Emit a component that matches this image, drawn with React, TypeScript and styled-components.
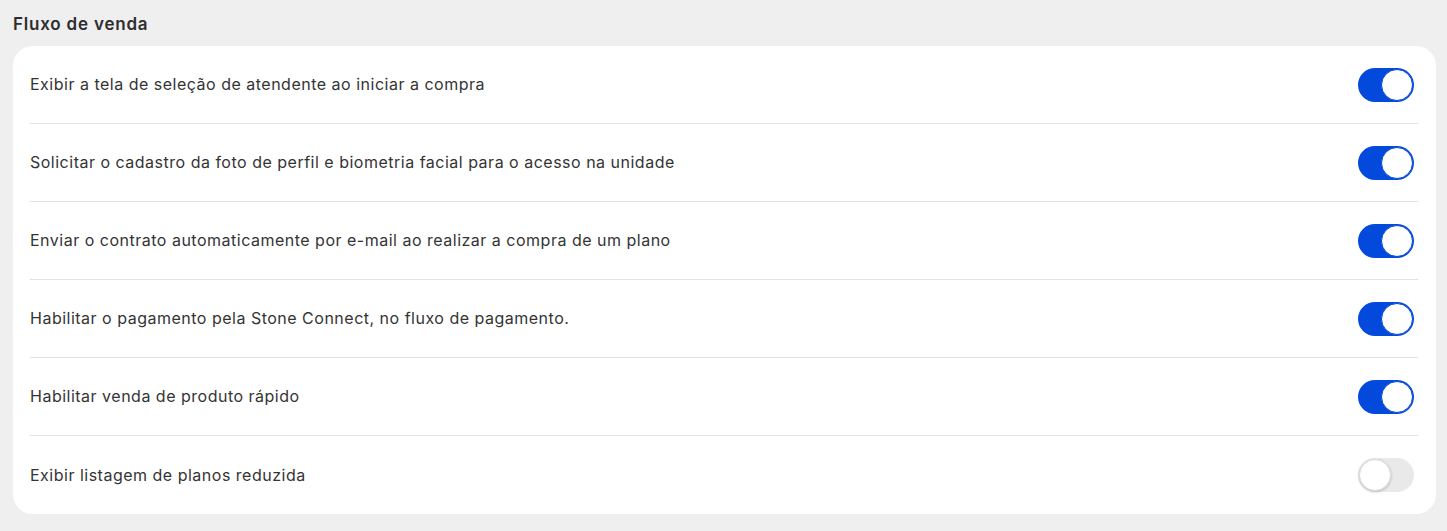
import styled, { createGlobalStyle } from "styled-components";
import { useState } from "react";

const GlobalStyle = createGlobalStyle`
  html, body {
    margin: 0;
    padding: 0;
    background: #efefef;
  }
  * {
    box-sizing: border-box;
  }
`;

const Page = styled.div`
  padding: 12px 11px 17px 13px;
  font-family: Inter, "Noto Sans", sans-serif;
  color: #333333;
`;

const Title = styled.h2`
  margin: 0 0 10px 0;
  font-size: 17px;
  line-height: 24px;
  font-weight: 600;
  letter-spacing: 0.8px;
  color: #2e2e2e;
`;

const Card = styled.div`
  background: #ffffff;
  border-radius: 20px;
  padding: 0 18px 0 17px;
`;

const Row = styled.div`
  display: flex;
  align-items: center;
  justify-content: space-between;
  height: 78px;
  border-bottom: 1px solid #e2e2e2;

  &:last-child {
    border-bottom: none;
  }
`;

const Label = styled.span`
  font-size: 16px;
  letter-spacing: 0.5px;
  color: #343434;
  margin-top: -1px;
`;

const Track = styled.button<{ $on: boolean }>`
  position: relative;
  width: 56px;
  height: 34px;
  margin-right: 4px;
  border: none;
  border-radius: 17px;
  padding: 0;
  cursor: pointer;
  background: ${(p) => (p.$on ? "#0249dc" : "#e9e9e9")};
  transition: background 200ms ease;
`;

const Knob = styled.span<{ $on: boolean }>`
  position: absolute;
  top: 1px;
  left: ${(p) => (p.$on ? "23px" : "1px")};
  width: 32px;
  height: 32px;
  border-radius: 50%;
  background: #ffffff;
  border: ${(p) => (p.$on ? "1.5px solid #0249dc" : "1px solid #dcdcdc")};
  box-shadow: ${(p) => (p.$on ? "none" : "0 1px 3px rgba(0,0,0,0.2)")};
  transition: left 200ms ease;
`;

const settings = [
  { label: "Exibir a tela de seleção de atendente ao iniciar a compra", on: true },
  { label: "Solicitar o cadastro da foto de perfil e biometria facial para o acesso na unidade", on: true },
  { label: "Enviar o contrato automaticamente por e-mail ao realizar a compra de um plano", on: true },
  { label: "Habilitar o pagamento pela Stone Connect, no fluxo de pagamento.", on: true },
  { label: "Habilitar venda de produto rápido", on: true },
  { label: "Exibir listagem de planos reduzida", on: false },
];

const App = () => {
  const [values, setValues] = useState(settings.map((s) => s.on));

  const toggle = (i: number) => {
    setValues((v) => v.map((x, j) => (j === i ? !x : x)));
  };

  return (
    <Page>
      <GlobalStyle />
      <Title>Fluxo de venda</Title>
      <Card>
        {settings.map((s, i) => (
          <Row key={s.label}>
            <Label>{s.label}</Label>
            <Track $on={values[i]} onClick={() => toggle(i)}>
              <Knob $on={values[i]} />
            </Track>
          </Row>
        ))}
      </Card>
    </Page>
  );
};

export default App;
